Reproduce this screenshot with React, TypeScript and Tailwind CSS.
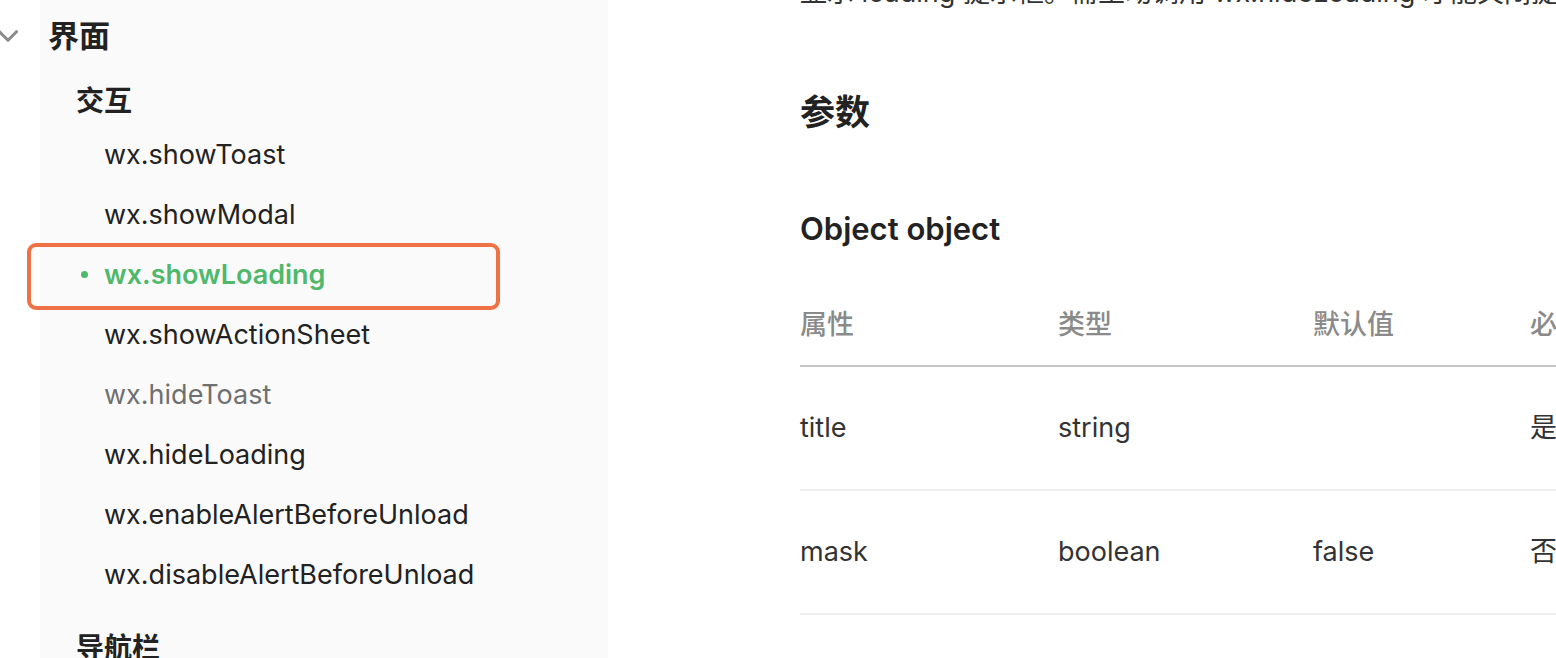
import { ChevronDown } from "lucide-react";

const font = { fontFamily: 'Inter, "Noto Sans CJK SC", sans-serif' };

const items = [
  { name: "wx.showToast" },
  { name: "wx.showModal" },
  { name: "wx.showLoading", active: true },
  { name: "wx.showActionSheet" },
  { name: "wx.hideToast", muted: true },
  { name: "wx.hideLoading" },
  { name: "wx.enableAlertBeforeUnload" },
  { name: "wx.disableAlertBeforeUnload" },
];

const rows = [
  { prop: "title", type: "string", def: "", req: "是" },
  { prop: "mask", type: "boolean", def: "false", req: "否" },
];

export default function App() {
  return (
    <div className="flex h-[658px] w-[1556px] overflow-hidden bg-white text-[#222]" style={font}>
      {/* sidebar */}
      <aside className="flex w-[608px] shrink-0">
        <div className="flex h-[72px] w-10 shrink-0 items-center">
          <ChevronDown className="-ml-[9px] h-[34px] w-[34px] text-[#8c8c8c]" strokeWidth={2.2} />
        </div>
        <div className="flex-1 bg-[#fafafa]">
          <div className="flex h-[70px] items-center pl-2 text-[31px] font-bold leading-none">界面</div>
          <div className="flex h-[62px] items-center pl-9 text-[28px] font-semibold leading-none">交互</div>
          <ul className="-mt-2">
            {items.map((item) => (
              <li
                key={item.name}
                className={`relative flex h-[60px] items-center pl-16 text-[27px] leading-none ${
                  item.active ? "font-semibold text-[#50b86a]" : item.muted ? "text-[#707070]" : "text-[#222]"
                }`}
              >
                {item.active ? (
                  <>
                    <span className="absolute left-[41px] top-[27px] h-[7px] w-[7px] rounded-full bg-[#50b86a]" />
                    <span className="absolute -left-[13px] -top-px h-[67px] w-[473px] rounded-[9px] border-4 border-[#ee7245]" />
                  </>
                ) : null}
                {item.name}
              </li>
            ))}
          </ul>
          <div className="mt-6 flex h-10 items-center pl-9 text-[28px] font-semibold leading-none">导航栏</div>
        </div>
      </aside>

      {/* main content */}
      <main className="ml-[192px] w-[1000px] shrink-0">
        <p className="-mt-[27px] h-10 whitespace-nowrap text-[27px] leading-[40px] text-[#333]">
          显示 loading 提示框。需主动调用 wx.hideLoading 才能关闭提示框
        </p>
        <h2 className="mt-[77px] text-[35px] font-bold leading-[44px]">参数</h2>
        <h3 className="mt-[73px] text-[31px] font-semibold leading-[44px]">Object object</h3>

        <div className="mt-[35px] grid h-[81px] grid-cols-[258px_255px_217px_270px] items-center border-b-2 border-[#c6c6c6] text-[27px] font-medium text-[#8a8a8a]">
          <span>属性</span>
          <span>类型</span>
          <span>默认值</span>
          <span>必填</span>
        </div>
        {rows.map((row) => (
          <div
            key={row.prop}
            className="grid h-[124px] grid-cols-[258px_255px_217px_270px] items-center border-b-2 border-[#efefef] text-[27px] text-[#333]"
          >
            <span>{row.prop}</span>
            <span>{row.type}</span>
            <span>{row.def}</span>
            <span>{row.req}</span>
          </div>
        ))}
      </main>
    </div>
  );
}
